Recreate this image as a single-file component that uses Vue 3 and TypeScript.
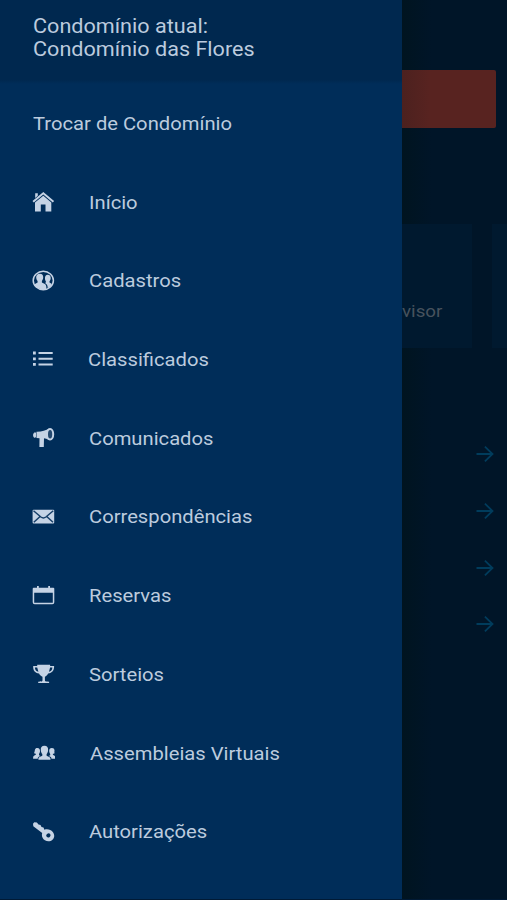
<script setup lang="ts">
type IconName = 'home' | 'people' | 'list' | 'horn' | 'mail' | 'calendar' | 'trophy' | 'group' | 'key'

interface MenuItem {
  icon: IconName
  label: string
}

const items: MenuItem[] = [
  { icon: 'home', label: 'Início' },
  { icon: 'people', label: 'Cadastros' },
  { icon: 'list', label: 'Classificados' },
  { icon: 'horn', label: 'Comunicados' },
  { icon: 'mail', label: 'Correspondências' },
  { icon: 'calendar', label: 'Reservas' },
  { icon: 'trophy', label: 'Sorteios' },
  { icon: 'group', label: 'Assembleias Virtuais' },
  { icon: 'key', label: 'Autorizações' },
]
</script>

<template>
  <div class="screen">
    <nav class="drawer">
      <header class="current">
        <span class="wide">Condomínio atual:</span>
        <span class="wide">Condomínio das Flores</span>
      </header>
      <ul class="menu">
        <li class="row switch"><span class="wide">Trocar de Condomínio</span></li>
        <li v-for="item in items" :key="item.label" class="row" :class="item.icon">
          <svg class="icon" viewBox="0 0 24 24" aria-hidden="true">
            <template v-if="item.icon === 'home'">
              <path d="M4.2 3.2h2.600v2.600l-2.600 2.200z" />
              <path d="M12.300 2 1.500 11l1.300 1.400L12.300 4.600l9.500 7.800 1.300-1.400z" />
              <path d="M12.300 5.700 4 12.400V21.600h5.800v-7h4.700v7h5.800v-9.200z" />
            </template>
            <template v-else-if="item.icon === 'people'">
              <ellipse cx="12.300" cy="11.500" rx="10.100" ry="9.200" class="ring" />
              <path d="M8.900 4.800c2.300 0 3.500 1.500 3.300 3.800-.1 1.700-.7 2.700-1.300 3.400v1.500l3 1.600c1.300.8 1.500 2 1.500 5-4 1-8.900.1-11.600-3.300-.8-1.200-.2-1.700.6-2.100l2.200-1.200V12c-.8-.8-1.300-1.900-1.400-3.500-.1-2.300 1.400-3.700 3.700-3.700z" />
              <path d="M16.600 5.800c2.200 0 3.300 1.400 3.100 3.500-.1 1.500-.6 2.300-1.200 3v1.200l2.500 1.400c-.9 2-2.300 3.400-4.300 4.300 0-2.800-.5-3.700-2.300-4.700l.5-2.200c-1.500-1.900-1.300-6.500 1.700-6.500z" />
            </template>
            <template v-else-if="item.icon === 'list'">
              <path d="M2 4.600h2.800v2.800H2zM2 10.400h2.800v2.800H2zM2 16h2.800v2.800H2zM7.500 5h14.200v2H7.500zM7.500 10.800h14.200v2H7.500zM7.500 16.400h14.200v2H7.500z" />
            </template>
            <template v-else-if="item.icon === 'horn'">
              <path d="M4.300 6.200C1.500 6.600 1.300 11.400 4 11.900L5 10.700V7z" />
              <path d="M5.500 5.700C11 5.800 14.500 4.400 18.500 2.300v12c-2.200-1.200-4.500-1.900-5.500-2l-.2 8.600H8.400l.1-8.600-3-.2z" />
              <ellipse cx="19.100" cy="8.300" rx="3.100" ry="5.300" class="bell" />
            </template>
            <template v-else-if="item.icon === 'mail'">
              <rect x="1.600" y="4.800" width="21.600" height="13.800" rx="1" />
              <path d="M2.500 5.800 9.900 12q2.500 1.800 5 0l7.400-6.200M2.800 17.300l6-5.600M22 17.300l-6-5.600" class="crease" />
            </template>
            <template v-else-if="item.icon === 'calendar'">
              <path d="M6 2.900h1.800v3H6zM17.200 2.900H19v3h-1.800z" />
              <path fill-rule="evenodd" d="M2.700 4.800h19.600q1 0 1 1V19.300q0 2-2 2H3.700q-2 0-2-2V5.800q0-1 1-1zM3.200 9.700v10h18.600v-10z" />
            </template>
            <template v-else-if="item.icon === 'trophy'">
              <path fill-rule="evenodd" d="M6.200 2.700h12.900v1.400h4c.2 4.500-2 7-6 7.500-.9 1.700-1.900 2.700-3.200 3.200v3.700c0 .8 1.100 1.200 4.200 1.200V21H7.200v-1.300c3.100 0 4.300-.4 4.300-1.200v-3.700c-1.300-.5-2.600-1.500-3.500-3.200-4.100-.6-6.100-3.100-5.800-7.500h4zM3.900 5.500c.2 2.500 1.400 3.800 3.500 4.300L6.200 5.500zM21.400 5.500h-2.300l-1.100 4.300c2-.5 3.200-1.800 3.400-4.300z" />
            </template>
            <template v-else-if="item.icon === 'group'">
              <path d="M6.400 7c2 0 2.700 1.300 2.600 3.200-.1 1.300-.6 2.100-1 2.700v1.300l1.500.9c-2 .9-2.700 1.200-2.800 2.600H2.100c0-2 .2-2.800 1.300-3.300l1.400-.7v-1c-1.900-.3-1.900-.7-1.400-1.500C4.300 9.500 3.200 7 6.400 7z" />
              <path d="M20.800 7c-2 0-2.700 1.300-2.600 3.200.1 1.300.6 2.100 1 2.700v1.300l-1.500.9c2 .9 2.700 1.200 2.800 2.600h3.900c0-2-.2-2.800-1.300-3.300l-1.200-.7v-1c1.900-.3 1.900-.7 1.400-1.500C23.700 9.500 23.800 7 20.800 7z" />
              <path d="M13.400 4.800c2.800 0 3.900 1.700 3.700 4.400-.1 1.900-.8 3.100-1.500 3.900v1.700l2.600 1.300c1.100.5 1.300 1.200 1.300 2.700H7.400c0-1.500.1-2.200 1.200-2.700l2.700-1.300v-1.700c-.7-.8-1.400-2-1.500-3.900-.2-2.700.9-4.400 3.600-4.400z" />
            </template>
            <template v-else>
              <path fill-rule="evenodd" d="M2 3.700 3.300 2.200 5.900 2.500 7.500 4.500 9.500 4.900 10.500 6.900l2 .6.900 2.200c3.300-1 6.500 0 8.400 2.400 4.400 6-2.400 11.600-7.900 8.200-2.800-1.900-3.500-4.700-2.700-7.300L2.300 6.300zM16.100 13.900c-2.300 1.900.3 4.700 2.600 3 2.200-2-.4-4.700-2.600-3z" />
            </template>
          </svg>
          <span class="wide">{{ item.label }}</span>
        </li>
      </ul>
    </nav>
    <main class="page">
      <div class="alert"></div>
      <section class="cards">
        <div class="card"><span class="wide">visor</span></div>
        <div class="card next"></div>
      </section>
      <ul class="links">
        <li v-for="n in 4" :key="n">
          <svg class="arrow" viewBox="0 0 20 20" aria-hidden="true">
            <path d="M1.500 10h16M9.900 2.700 17.500 10l-7.600 7.300" />
          </svg>
        </li>
      </ul>
    </main>
  </div>
</template>

<style>
body {
  background: #001528;
}
</style>

<style scoped>
.screen {
  display: flex;
  height: 900px;
  overflow: hidden;
  box-sizing: border-box;
  border-bottom: 1px solid #001a35;
  background: #001528;
  color: #bccbde;
  font-family: Roboto, "Liberation Sans", sans-serif;
}
.drawer {
  flex: 0 0 402px;
  background: #002d59;
}
.current {
  display: flex;
  flex-direction: column;
  align-items: flex-start;
  box-sizing: border-box;
  height: 84px;
  padding: 15px 33px 0;
  background: linear-gradient(#00284f 80px, #002d59);
  font-size: 19.900px;
  line-height: 23px;
}
.wide {
  display: inline-block;
  transform: scaleX(1.086);
  transform-origin: left center;
  white-space: nowrap;
}
.menu,
.links {
  list-style: none;
  margin: 0;
  padding: 0;
}
.row {
  display: flex;
  align-items: center;
  gap: 33.700px;
  height: 78.700px;
  padding-left: 31px;
  font-size: 18.600px;
}
.row .wide {
  padding-top: 1.400px;
}
.switch {
  padding-left: 33px;
}
.list {
  gap: 32.500px;
}
.group {
  gap: 35.200px;
}
.icon {
  width: 24px;
  height: 24px;
  fill: #c5d3e5;
}
.ring {
  fill: none;
  stroke: #c5d3e5;
  stroke-width: 1.5;
}
.bell {
  fill: #23486f;
  stroke: #c5d3e5;
  stroke-width: 2;
}
.crease {
  fill: none;
  stroke: #173f69;
  stroke-width: 1.5;
}
.page {
  flex: 1;
  min-width: 0;
  background: linear-gradient(90deg, #001420, #001528 30px);
}
.alert {
  width: 94px;
  height: 58px;
  margin-top: 70px;
  border-radius: 0 2px 2px 0;
  background: linear-gradient(90deg, #4c211f, #582320 28px);
}
.cards {
  display: flex;
  gap: 20px;
  margin-top: 96px;
}
.card {
  box-sizing: border-box;
  flex: 0 0 70px;
  height: 124px;
  padding-top: 76px;
  background: #00192f;
  color: #47525d;
  font-size: 17.300px;
  line-height: 22px;
}
.next {
  flex: 1;
}
.links {
  padding-top: 78px;
}
.links li {
  display: flex;
  align-items: center;
  justify-content: flex-end;
  height: 56.700px;
  padding-right: 12.500px;
}
.arrow {
  width: 20px;
  height: 20px;
  fill: none;
  stroke: #003c5c;
  stroke-width: 1.800;
}
</style>
